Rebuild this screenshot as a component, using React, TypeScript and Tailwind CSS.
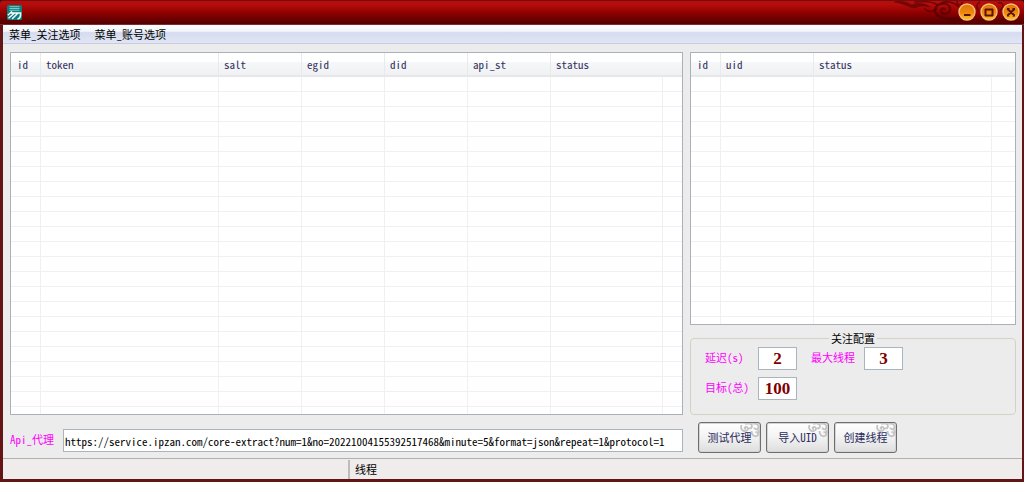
import { useId } from 'react';

type Column = { name: string; width: string };

const API_URL =
  'https://service.ipzan.com/core-extract?num=1&no=20221004155392517468&minute=5&format=json&repeat=1&protocol=1';

const accountColumns: Column[] = [
  { name: 'id', width: 'w-[30px]' },
  { name: 'token', width: 'w-[178px]' },
  { name: 'salt', width: 'w-[83px]' },
  { name: 'egid', width: 'w-[83px]' },
  { name: 'did', width: 'w-[83px]' },
  { name: 'api_st', width: 'w-[83px]' },
  { name: 'status', width: 'w-[112px]' },
];

const followColumns: Column[] = [
  { name: 'id', width: 'w-[30px]' },
  { name: 'uid', width: 'w-[93px]' },
  { name: 'status', width: 'w-[178px]' },
];

function DataList({ label, columns, rows }: { label: string; columns: Column[]; rows: number }) {
  const last = columns.length - 1;
  return (
    <div className="flex flex-1 flex-col border border-[#a9b0b8] bg-white">
      <table aria-label={label} className="w-full flex-none table-fixed border-separate border-spacing-0">
        <colgroup>
          {columns.map((c) => (
            <col key={c.name} className={c.width} />
          ))}
          <col />
        </colgroup>
        <thead>
          <tr className="h-6 bg-[linear-gradient(#ffffff_0,#ffffff_35%,#f6f7f9_40%,#eef0f2_100%)]">
            {columns.map((c, i) => (
              <th
                key={c.name}
                scope="col"
                colSpan={i === last ? 2 : 1}
                className={`h-6 border-b-2 border-b-[#e6e7ea] p-0 text-left font-normal leading-4 text-[#33305c] ${
                  i === last ? '' : 'border-r border-r-[#e9eaec]'
                } ${i === 0 ? 'pl-[6px]' : 'pl-[5px]'}`}
              >
                {c.name}
              </th>
            ))}
          </tr>
        </thead>
        <tbody>
          {Array.from({ length: rows }, (_, r) => (
            <tr key={r}>
              {columns.map((c) => (
                <td key={c.name} className="h-[15px] border-b border-r border-[#f0f0f0] p-0" />
              ))}
              <td className="h-[15px] border-b border-[#f0f0f0] p-0" />
            </tr>
          ))}
        </tbody>
      </table>
      <div className="flex min-h-[6px] flex-1">
        {columns.map((c) => (
          <div key={c.name} className={`flex-none border-r border-[#f0f0f0] ${c.width}`} />
        ))}
      </div>
    </div>
  );
}

function NumberField({ label, value }: { label: string; value: string }) {
  const id = useId();
  return (
    <>
      <label htmlFor={id} className="-mt-[3px] text-[#ff00ff]">
        {label}
      </label>
      <input
        id={id}
        defaultValue={value}
        className="h-[23px] w-[39px] border border-[#a9b4bc] bg-white p-0 text-center font-['Liberation_Serif',serif] text-[17px] font-bold leading-5 text-[#800000] outline-none"
      />
    </>
  );
}

function SkinButton({ children }: { children: string }) {
  return (
    <button
      type="button"
      className="relative h-[31px] w-[63px] overflow-hidden rounded-[3px] border border-[#6e6e6e] bg-[linear-gradient(#ffffff,#f4f4f4_45%,#dedede)] text-[#2b2b5e] shadow-[inset_0_0_0_1px_#d4d4d4]"
    >
      <svg
        aria-hidden="true"
        viewBox="0 0 20 16"
        className="absolute right-0 top-0 h-4 w-5"
        fill="none"
        stroke="#c4c4c4"
        strokeWidth="1.800"
      >
        <path d="M1.500 2C0 6 3 9 6 8C9 7 8.500 3.500 5.500 4C4 4.500 4.500 6 6 6" />
        <path d="M5 1C8 0 12 0 12 3C12 5 10 6 9 5" />
        <path d="M13 1C15 0 18.500 1 18.500 4C18.500 7 14.500 7 14.500 4.500" />
        <path d="M11.500 8C11.500 12 14 14 17 13C19 12 18 8 15.500 9.500M18 7L19.500 10" />
      </svg>
      <span className="relative block w-full text-center leading-[27px]">{children}</span>
    </button>
  );
}

function WindowButton({ label, path }: { label: string; path: string }) {
  return (
    <button type="button" aria-label={label} className="size-[18px] rounded-full">
      <svg aria-hidden="true" viewBox="0 0 18 18" className="size-[18px]" fill="none">
        <defs>
          <linearGradient id={`glow-${label}`} x1="0" y1="0" x2="0" y2="1">
            <stop offset="0" stopColor="#e07008" />
            <stop offset="0.550" stopColor="#ee8a0a" />
            <stop offset="1" stopColor="#ffc22a" />
          </linearGradient>
        </defs>
        <circle cx="9" cy="9" r="8" fill={`url(#glow-${label})`} stroke="#f6bf74" strokeWidth="1.400" />
        <path d={path} stroke="#5c0f08" strokeWidth="2" />
      </svg>
    </button>
  );
}

function TitleBar() {
  return (
    <header className="relative flex h-[25px] items-center justify-between border-b border-[#7c2c2c] bg-[linear-gradient(#5a0808_0,#b01010_6%,#b80c0c_18%,#8c0000_55%,#520000_100%)] pl-[7px] pr-1">
      <svg aria-hidden="true" viewBox="0 0 15 15" className="size-[15px]" fill="none">
        <rect width="15" height="15" rx="1.500" fill="#08807f" />
        <path d="M2.500 1.700H12.500M2.500 3.500H12.500M2.500 5.300H12.500" stroke="#8fd0cc" strokeWidth="0.900" />
        <path
          d="M5 6.500L0.800 10.200M4 8H13.600C13.800 11 12.800 13.500 10.500 14M7.500 8L1.500 13.300M10.500 8.500L5 14"
          stroke="#ffffff"
          strokeWidth="1.500"
        />
      </svg>
      <svg
        aria-hidden="true"
        viewBox="0 0 128 24"
        className="absolute right-1 top-0 h-6 w-32"
        fill="none"
        stroke="#4a0202"
        strokeOpacity="0.600"
      >
        <path d="M2 2C9 0 15 2 20 5C25 2 34 3 38 7C31 5 26 6 23 8C16 7 14 4 2 2Z" fill="#4a0202" fillOpacity="0.550" strokeWidth="0.500" />
        <path d="M22 2C30 1 40 1 46 5M32 8C36 13 42 12 45 8" strokeWidth="1.500" />
        <path d="M66 17C58 21 43 18 43 10C43 3 56 1 58 8C59 14 50 16 49 11C49 8 53 8 53 10" strokeWidth="2.500" />
        <path d="M48 4C54 0 62 2 67 7M58 20C66 22 72 18 72 14" strokeWidth="2" />
        <path d="M65 1C65 6 71 6 70 2M88 2C84 4 84 9 87 11M85 20C91 23 94 17 92 13M106 3C112 1 112 9 108 10M106 20C111 22 114 17 112 14" strokeWidth="1.500" />
      </svg>
      <div className="relative flex gap-[4px]">
        <WindowButton label="minimize" path="M6 12H12.500" />
        <WindowButton label="maximize" path="M5 6.500H13M5.500 6V13M12.500 6V13M5 12.500H13" />
        <WindowButton label="close" path="M5.500 6L12.500 12.500M12.500 6L5.500 12.500M5 6H7.500M10.500 6H13M5 12.500H7.500M10.500 12.500H13" />
      </div>
    </header>
  );
}

export default function App() {
  return (
    <div className="min-h-screen bg-[#2a1010] font-['Noto_Sans_Mono_CJK_SC','Noto_Sans_CJK_SC',monospace] text-[11px] leading-4">
      <div className="flex min-h-screen flex-col overflow-hidden rounded-t-[4px]">
        <TitleBar />
        <div className="flex flex-1 flex-col border-b-[3px] border-l-[3px] border-r-2 border-[#641414] bg-[#ececec]">
          <nav
            aria-label="菜单"
            className="flex h-[19px] flex-none items-center gap-[14px] border-b border-[#c9cce0] bg-[linear-gradient(#ffffff_0,#f1f4fa_35%,#d6dcee_42%,#e0e6f5_100%)] pl-[6px] text-black"
          >
            <button type="button">菜单_关注选项</button>
            <button type="button">菜单_账号选项</button>
          </nav>

          <main className="flex flex-1 gap-[7px] pl-[7px] pr-[6px] pt-2">
            <section className="flex min-w-0 flex-1 flex-col">
              <DataList label="账号列表" columns={accountColumns} rows={22} />
              <div className="mb-[6px] mt-[14px] flex items-center">
                <label htmlFor="api" className="-mt-[3px] w-[53px] flex-none text-[#ff00ff]">
                  Api_代理
                </label>
                <input
                  id="api"
                  defaultValue={API_URL}
                  className="h-[23px] min-w-0 flex-1 border border-[#a9b4bc] bg-white px-px py-0 text-black outline-none"
                />
              </div>
            </section>

            <section className="flex w-[326px] flex-none flex-col">
              <DataList label="关注列表" columns={followColumns} rows={16} />
              <fieldset className="mt-[5px] rounded-[4px] border border-[#d3d3c4] px-[14px] pb-[14px]">
                <legend className="mx-auto px-[2px] text-black">关注配置</legend>
                <div className="grid grid-cols-[53px_53px_53px_39px] items-center gap-y-[7px] pt-px">
                  <NumberField label="延迟(s)" value="2" />
                  <NumberField label="最大线程" value="3" />
                  <NumberField label="目标(总)" value="100" />
                </div>
              </fieldset>
              <div className="mb-[5px] mt-[7px] flex gap-[5px] pl-2">
                <SkinButton>测试代理</SkinButton>
                <SkinButton>导入UID</SkinButton>
                <SkinButton>创建线程</SkinButton>
              </div>
            </section>
          </main>

          <footer className="flex h-[21px] flex-none border-t border-[#b0b0b0] bg-[#f0eceb] pt-px text-black">
            <div className="w-[347px] flex-none border-r-2 border-[#bcbcbc]" />
            <span className="pl-[5px] leading-[18px]">线程</span>
          </footer>
        </div>
      </div>
    </div>
  );
}
